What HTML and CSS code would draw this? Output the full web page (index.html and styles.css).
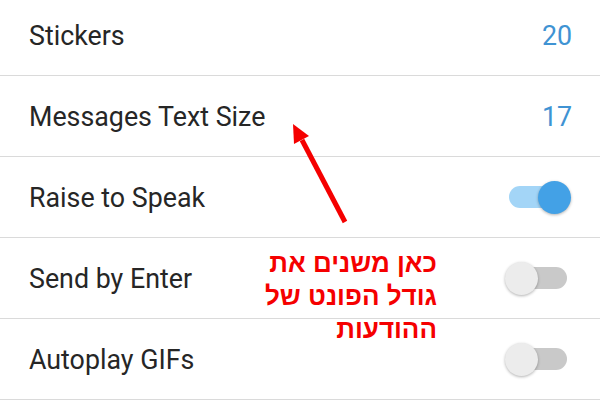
FILE: index.html
```html
<!DOCTYPE html>
<html lang="en">

<head>
    <meta charset="UTF-8" />
    <meta name="viewport" content="width=device-width, initial-scale=1.0" />
    <title>Settings</title>
    <link rel="stylesheet" href="styles.css">
</head>

<body>
    <div class="screen">
        <div class="list">
            <div class="row first">
                <span class="label">Stickers</span>
                <span class="value">20</span>
            </div>
            <div class="row">
                <span class="label">Messages Text Size</span>
                <span class="value">17</span>
            </div>
            <div class="row">
                <span class="label">Raise to Speak</span>
                <div class="switch on"><div class="knob"></div></div>
            </div>
            <div class="row">
                <span class="label">Send by Enter</span>
                <div class="switch"><div class="knob"></div></div>
            </div>
            <div class="row">
                <span class="label">Autoplay GIFs</span>
                <div class="switch"><div class="knob"></div></div>
            </div>
        </div>

        <div class="note" dir="rtl" lang="he">
            כאן משנים את<br>
            גודל הפונט של<br>
            ההודעות
        </div>

        <svg class="arrow" width="600" height="419" viewBox="0 0 600 419">
            <line x1="345" y1="222" x2="302" y2="140" stroke="#f50000" stroke-width="5" />
            <polygon points="293,124 309,136 294,144" fill="#f50000" />
        </svg>
    </div>
</body>

</html>
```

FILE: styles.css
```css
body {
    margin: 0;
    background: #fff;
    font-family: Roboto, "Liberation Sans", sans-serif;
}

.screen {
    position: relative;
    width: 600px;
    height: 419px;
    overflow: hidden;
}

.list {
    margin-top: -5px;
}

.row {
    height: 80px;
    border-bottom: 1px solid #dadada;
    display: flex;
    align-items: center;
    justify-content: space-between;
    padding: 0 28px 0 29px;
}

.label {
    font-size: 26.8px;
    color: #262626;
    padding-top: 2px;
}

.value {
    font-size: 26.8px;
    color: #3f93d3;
    padding-top: 2px;
}

.switch {
    width: 58px;
    height: 22px;
    border-radius: 11px;
    background: #c9c9c9;
    display: flex;
    align-items: center;
    margin-right: 5px;
}

.switch .knob {
    width: 33px;
    height: 33px;
    border-radius: 50%;
    background: #ececec;
    box-shadow: 0 1px 3px rgba(0, 0, 0, 0.3);
    margin-left: -4px;
}

.switch.on {
    background: #a3d5f7;
    justify-content: flex-end;
}

.switch.on .knob {
    background: #43a1e6;
    margin-left: 0;
    margin-right: -4px;
}

.note {
    position: absolute;
    top: 247px;
    right: 163px;
    font-family: "Liberation Sans", "DejaVu Sans", sans-serif;
    font-weight: bold;
    font-size: 26px;
    line-height: 33px;
    color: #f50000;
    text-align: right;
}

.arrow {
    position: absolute;
    left: 0;
    top: 0;
}
```
